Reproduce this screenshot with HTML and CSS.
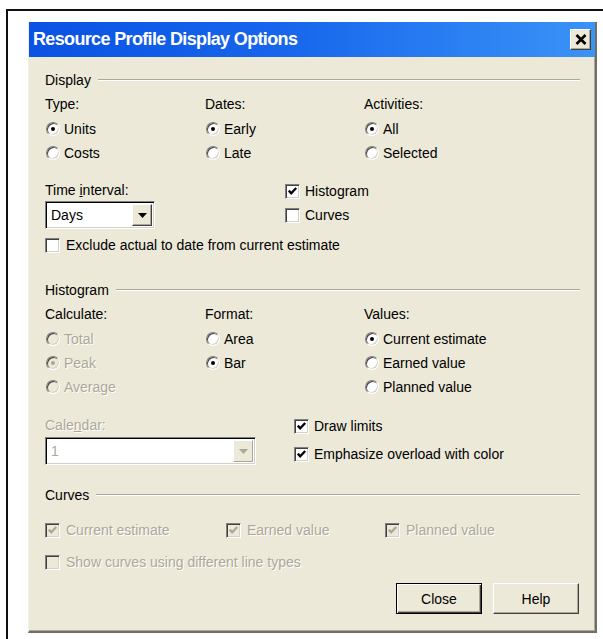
FILE: index.html
```html
<!DOCTYPE html>
<html lang="en">
<head>
<meta charset="utf-8">
<title>Resource Profile Display Options</title>
<link rel="stylesheet" href="styles.css">
</head>
<body>
<div class="frame">
  <div class="dialog">
    <div class="titlebar">
      <span class="title">Resource Profile Display Options</span>
      <span class="close-btn">
        <svg width="12" height="11" viewBox="0 0 12 11"><path d="M1.5 1 L10.5 10 M10.5 1 L1.5 10" stroke="#000" stroke-width="2.6" fill="none"/></svg>
      </span>
    </div>

    <div class="body">
      <!-- Display group -->
      <div class="group-head">Display</div>
      <div class="cols3">
        <div class="col">
          <div class="lbl">Type:</div>
          <div class="opts">
            <div class="opt"><span class="radio on"></span>Units</div>
            <div class="opt"><span class="radio"></span>Costs</div>
          </div>
        </div>
        <div class="col">
          <div class="lbl">Dates:</div>
          <div class="opts">
            <div class="opt"><span class="radio on"></span>Early</div>
            <div class="opt"><span class="radio"></span>Late</div>
          </div>
        </div>
        <div class="col">
          <div class="lbl">Activities:</div>
          <div class="opts">
            <div class="opt"><span class="radio on"></span>All</div>
            <div class="opt"><span class="radio"></span>Selected</div>
          </div>
        </div>
      </div>

      <div class="split split-display">
        <div class="col">
          <div class="lbl-short">Time <u>i</u>nterval:</div>
          <div class="combo combo-days">
            <span class="combo-text">Days</span>
            <span class="combo-btn"><svg width="9" height="5" viewBox="0 0 9 5"><polygon points="0,0 9,0 4.5,5" fill="#000"/></svg></span>
          </div>
        </div>
        <div class="col">
          <div class="opt"><span class="check on"><svg width="11" height="11" viewBox="0 0 11 11"><path d="M1.8 4.6 L4.2 7.2 L9.2 2" stroke="#000" stroke-width="2.3" fill="none"/></svg></span>Histogram</div>
          <div class="opt"><span class="check"></span>Curves</div>
        </div>
      </div>

      <div class="opt exclude"><span class="check"></span>Exclude actual to date from current estimate</div>

      <!-- Histogram group -->
      <div class="group-head hist-head">Histogram</div>
      <div class="cols3">
        <div class="col">
          <div class="lbl">Calculate:</div>
          <div class="opts">
            <div class="opt off"><span class="radio"></span>Total</div>
            <div class="opt off"><span class="radio on"></span>Peak</div>
            <div class="opt off"><span class="radio"></span>Average</div>
          </div>
        </div>
        <div class="col">
          <div class="lbl">Format:</div>
          <div class="opts">
            <div class="opt"><span class="radio"></span>Area</div>
            <div class="opt"><span class="radio on"></span>Bar</div>
          </div>
        </div>
        <div class="col">
          <div class="lbl">Values:</div>
          <div class="opts">
            <div class="opt"><span class="radio on"></span>Current estimate</div>
            <div class="opt"><span class="radio"></span>Earned value</div>
            <div class="opt"><span class="radio"></span>Planned value</div>
          </div>
        </div>
      </div>

      <div class="split split-calendar">
        <div class="col">
          <div class="lbl-short lbl-cal off">Cale<u>n</u>dar:</div>
          <div class="combo combo-cal off">
            <span class="combo-text">1</span>
            <span class="combo-btn"><svg width="9" height="5" viewBox="0 0 9 5"><polygon points="0,0 9,0 4.5,5" fill="#aca899"/></svg></span>
          </div>
        </div>
        <div class="col">
          <div class="opt"><span class="check on"><svg width="11" height="11" viewBox="0 0 11 11"><path d="M1.8 4.6 L4.2 7.2 L9.2 2" stroke="#000" stroke-width="2.3" fill="none"/></svg></span>Draw limits</div>
          <div class="opt emph"><span class="check on"><svg width="11" height="11" viewBox="0 0 11 11"><path d="M1.8 4.6 L4.2 7.2 L9.2 2" stroke="#000" stroke-width="2.3" fill="none"/></svg></span>Emphasize overload with color</div>
        </div>
      </div>

      <!-- Curves group -->
      <div class="group-head curves-head">Curves</div>
      <div class="curve-row">
        <div class="opt off"><span class="check on"><svg width="11" height="11" viewBox="0 0 11 11"><path d="M1.8 4.6 L4.2 7.2 L9.2 2" stroke="#aca899" stroke-width="2.3" fill="none"/></svg></span>Current estimate</div>
        <div class="opt off"><span class="check on"><svg width="11" height="11" viewBox="0 0 11 11"><path d="M1.8 4.6 L4.2 7.2 L9.2 2" stroke="#aca899" stroke-width="2.3" fill="none"/></svg></span>Earned value</div>
        <div class="opt off"><span class="check on"><svg width="11" height="11" viewBox="0 0 11 11"><path d="M1.8 4.6 L4.2 7.2 L9.2 2" stroke="#aca899" stroke-width="2.3" fill="none"/></svg></span>Planned value</div>
      </div>
      <div class="opt off show-types"><span class="check"></span>Show curves using different line types</div>

      <div class="buttons">
        <span class="btn btn-default">Close</span>
        <span class="btn">Help</span>
      </div>
    </div>
  </div>
</div>
</body>
</html>
```

FILE: styles.css
```css
html, body {
  margin: 0;
  padding: 0;
  background: #fff;
}

body {
  width: 603px;
  height: 639px;
  overflow: hidden;
  font-family: "Liberation Sans", Arial, sans-serif;
  font-size: 14px;
  color: #000;
}

/* black frame the dialog sits in */
.frame {
  margin: 9px 0 0 6px;
  border-top: 2px solid #111;
  border-left: 2px solid #111;
  height: 640px;
  padding: 11px 0 0 20px;
  box-sizing: border-box;
}

.dialog {
  width: 569px;
  height: 611px;
  box-sizing: border-box;
  background: #ece9d8;
  border-left: 1px solid #f1efe6;
  border-right: 2px solid #716f64;
  border-bottom: 2px solid #716f64;
  box-shadow: inset -1px -1px 0 #aca899;
}

.titlebar {
  height: 35px;
  display: flex;
  align-items: center;
  justify-content: space-between;
  padding: 0 4px 0 4px;
  background: linear-gradient(90deg, #0a52e3 0%, #1766ec 45%, #3a93f7 100%);
}

.title {
  color: #fff;
  font-weight: bold;
  font-size: 18px;
  letter-spacing: -0.65px;
}

.close-btn {
  width: 21px;
  height: 21px;
  box-sizing: border-box;
  display: flex;
  align-items: center;
  justify-content: center;
  background: #ece9d8;
  border-top: 1px solid #fff;
  border-left: 1px solid #fff;
  border-right: 1px solid #404040;
  border-bottom: 1px solid #404040;
  box-shadow: inset -1px -1px 0 #aca899;
}

.body {
  padding: 11px 15px 0 16px;
}

/* etched section header */
.group-head {
  display: flex;
  align-items: center;
  height: 24px;
  line-height: 24px;
}
.group-head::after {
  content: "";
  flex: 1;
  margin-left: 7px;
  border-top: 1px solid #aca899;
  border-bottom: 1px solid #fff;
}
.hist-head { margin-top: 21px; }
.curves-head { margin-top: 17px; }

.cols3 {
  display: grid;
  grid-template-columns: 160px 159px 1fr;
}

.lbl {
  height: 24px;
  line-height: 24px;
}
.opts { margin-top: 1px; }

.opt {
  display: flex;
  align-items: center;
  height: 24px;
  white-space: nowrap;
}

.off {
  color: #aca899;
  text-shadow: 1px 1px 0 #fff;
}

/* classic 3D radio */
.radio {
  position: relative;
  width: 14px;
  height: 14px;
  margin: 0 4px 0 1px;
  flex: none;
  box-sizing: border-box;
  border-radius: 50%;
  background: #fff;
  border: 1px solid;
  border-color: #808080 #fff #fff #808080;
  box-shadow: inset 1px 1px 0 #404040, inset -1px -1px 0 #d4d0c8;
}
.radio.on::after {
  content: "";
  position: absolute;
  left: 4px;
  top: 4px;
  width: 4px;
  height: 4px;
  border-radius: 50%;
  background: #000;
}
.off .radio { background: #ece9d8; }
.off .radio.on::after { background: #aca899; }

/* classic 3D checkbox */
.check {
  width: 15px;
  height: 15px;
  margin-right: 6px;
  flex: none;
  box-sizing: border-box;
  display: flex;
  align-items: center;
  justify-content: center;
  background: #fff;
  border: 1px solid;
  border-color: #808080 #fff #fff #808080;
  box-shadow: inset 1px 1px 0 #404040, inset -1px -1px 0 #d4d0c8;
}
.off .check { background: #ece9d8; }

.split {
  display: grid;
}
.split-display {
  grid-template-columns: 240px 1fr;
  margin-top: 14px;
}
.split-calendar {
  grid-template-columns: 249px 1fr;
  margin-top: 15px;
}
.split-display .check,
.split-calendar .check { margin-right: 5px; }

.lbl-short {
  height: 22px;
  line-height: 22px;
}
.lbl-cal { height: 23px; line-height: 23px; }

.combo {
  height: 28px;
  box-sizing: border-box;
  display: flex;
  align-items: center;
  justify-content: space-between;
  background: #fff;
  border: 1px solid;
  border-color: #808080 #fff #fff #808080;
  box-shadow: inset 1px 1px 0 #000, inset -1px -1px 0 #d4d0c8;
  padding: 2px 2px 2px 5px;
}
.combo-days { width: 110px; }
.combo-cal { width: 211px; }

.combo-btn {
  width: 20px;
  height: 22px;
  box-sizing: border-box;
  display: flex;
  align-items: center;
  justify-content: center;
  background: #ece9d8;
  border-top: 1px solid #fff;
  border-left: 1px solid #fff;
  border-right: 1px solid #404040;
  border-bottom: 1px solid #404040;
  box-shadow: inset -1px -1px 0 #aca899;
}
.combo-cal .combo-btn {
  border-color: #fff #aca899 #aca899 #fff;
  box-shadow: none;
}

.exclude { margin-top: 4px; }
.emph { margin-top: 4px; }

.curve-row {
  display: grid;
  grid-template-columns: 181px 159px 1fr;
  margin-top: 11px;
}
.curve-row .check { margin-right: 6px; }

.show-types { margin-top: 8px; }

.buttons {
  display: flex;
  justify-content: flex-end;
  gap: 11px;
  margin-top: 9px;
  padding-right: 1px;
}

.btn {
  width: 86px;
  height: 31px;
  box-sizing: border-box;
  display: flex;
  align-items: center;
  justify-content: center;
  background: #ece9d8;
  border-top: 1px solid #fff;
  border-left: 1px solid #fff;
  border-right: 1px solid #404040;
  border-bottom: 1px solid #404040;
  box-shadow: inset -1px -1px 0 #aca899;
}
.btn-default {
  border: 1px solid #000;
  box-shadow: inset 1px 1px 0 #fff, inset -1px -1px 0 #404040, inset -2px -2px 0 #aca899;
}
```
